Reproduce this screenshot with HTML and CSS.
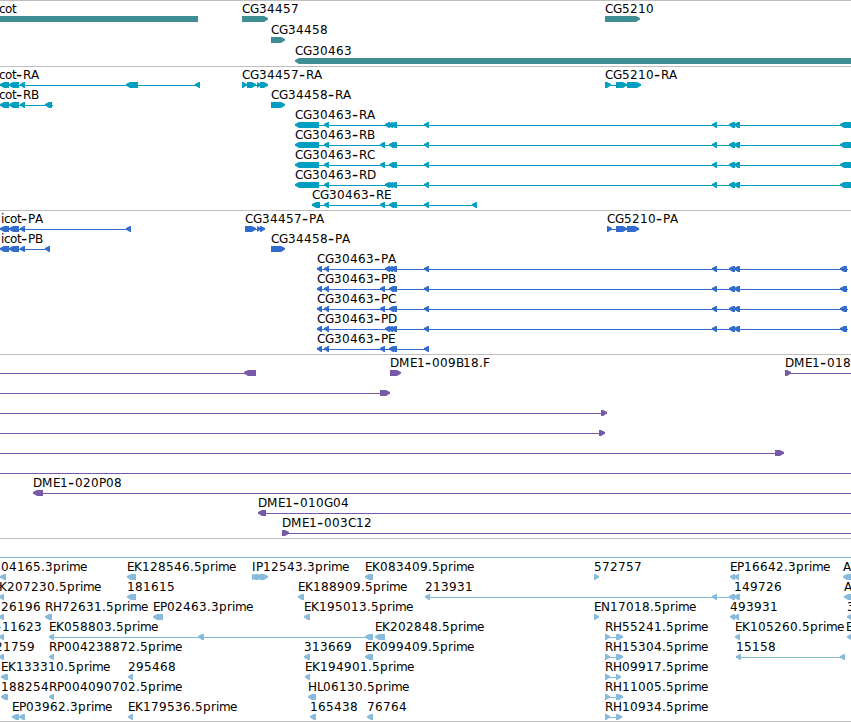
FILE: index.html
```html
<!DOCTYPE html>
<html lang="en">
<head>
    <meta charset="UTF-8">
    <meta name="viewport" content="width=device-width, initial-scale=1.0">
    <title>Genome Browser</title>
    <link rel="stylesheet" href="styles.css">
</head>
<body>
    <main class="browser">
        <section class="track genes" id="genes"></section>
        <section class="track transcripts" id="transcripts"></section>
        <section class="track proteins" id="proteins"></section>
        <section class="track clones" id="clones"></section>
        <section class="track insertions" id="insertions"></section>
    </main>
    <script src="script.js"></script>
</body>
</html>
```

FILE: styles.css
```css
body {
    margin: 0;
    background-color: #fff;
    overflow: hidden;
}
.browser {
    display: flex;
    flex-direction: column;
    width: 851px;
}
.track {
    border-top: 1px solid #bebebe;
    padding: 1px 0 2px;
}
.genes {
    color: #3e8e94;
    padding-bottom: 1px;
}
.transcripts {
    color: #009ec1;
}
.proteins {
    color: #326ccd;
}
.clones {
    color: #7859a8;
}
.insertions {
    color: #87bbdd;
    border-bottom: 1px solid #bebebe;
    padding-bottom: 1px;
}
.row {
    display: block;
    width: 851px;
    height: 20px;
    overflow: visible;
}
.genes .row {
    height: 21px;
}
.shape {
    fill: currentColor;
}
.label {
    fill: #000;
    font-family: "DejaVu Sans", Verdana, sans-serif;
    font-size: 12px;
}
.dash {
    font-size: 17px;
}
```

FILE: script.js
```javascript
const SVG = 'http://www.w3.org/2000/svg';

// glyph advances, digits are 8px
const advance = {
    C: 8, G: 9, R: 8, A: 8, B: 7, D: 9, E: 7, P: 7, M: 11, K: 8, H: 9, L: 6, N: 9, I: 4, F: 7,
    '-': 7, '.': 4, c: 6, o: 7, t: 4, p: 8, r: 5, i: 3, m: 11, e: 7
};

// feature: [label, label x, direction, exons, line]
const right = [[712, 717], [729, 735], [734, 740]];
const cot = [[0, 9], [9, 19], [20, 25]];
const introns1 = [[324, 329], [385, 390], [388, 393], [391, 397], [424, 429]];
const introns2 = [[324, 329], [380, 385], [389, 394], [391, 397], [424, 429]];
const rna = first => [[295, 319], ...first, ...right, [840, 860]];
const pep = first => [[317, 322], ...first, ...right, [840, 847]];
const rh = end => [[605, 610], [616, end]];

const tracks = {
    genes: [
        [['cot', -1, '', [[-10, 198]]], ['CG34457', 242, '>', [[242, 268]]], ['CG5210', 605, '>', [[605, 640]]]],
        [['CG34458', 271, '>', [[271, 285]]]],
        [['CG30463', 295, '<', [[295, 860]]]]
    ],
    transcripts: [
        [['cot-RA', -1, '<', [...cot, [126, 138], [195, 200]], [0, 200]],
            ['CG34457-RA', 242, '>', [[242, 247], [247, 256], [257, 261], [260, 268]], [242, 268]],
            ['CG5210-RA', 605, '>', [[605, 611], [616, 627], [627, 641]], [605, 641]]],
        [['cot-RB', -1, '<', [...cot, [45, 52]], [0, 53]], ['CG34458-RA', 271, '>', [[271, 285]]]],
        [['CG30463-RA', 295, '<', rna(introns1), [295, 851]]],
        [['CG30463-RB', 295, '<', rna(introns2), [295, 851]]],
        [['CG30463-RC', 295, '<', rna(introns2), [295, 851]]],
        [['CG30463-RD', 295, '<', rna(introns1), [295, 851]]],
        [['CG30463-RE', 312, '<', [[312, 320], ...introns2, [472, 477]], [312, 477]]]
    ],
    proteins: [
        [['icot-PA', 1, '<', [...cot, [126, 131]], [0, 131]],
            ['CG34457-PA', 245, '>', [[245, 256], [257, 261], [260, 265]], [245, 265]],
            ['CG5210-PA', 607, '>', [[607, 612], [616, 627], [627, 639]], [607, 639]]],
        [['icot-PB', 1, '<', [...cot, [45, 50]], [0, 50]], ['CG34458-PA', 271, '>', [[271, 285]]]],
        [['CG30463-PA', 317, '<', pep(introns1), [317, 848]]],
        [['CG30463-PB', 317, '<', pep(introns2), [317, 848]]],
        [['CG30463-PC', 317, '<', pep(introns2), [317, 848]]],
        [['CG30463-PD', 317, '<', pep(introns1), [317, 848]]],
        [['CG30463-PE', 317, '<', [[317, 322], ...introns2], [317, 429]]]
    ],
    clones: [
        [['', 0, '<', [[244, 256]], [0, 256]], ['DME1-009B18.F', 390, '>', [[390, 401]]],
            ['DME1-018', 785, '>', [[785, 791]], [785, 851]]],
        [['', 0, '>', [[380, 390]], [0, 390]]],
        [['', 0, '>', [[601, 607]], [0, 607]]],
        [['', 0, '>', [[599, 605]], [0, 605]]],
        [['', 0, '>', [[775, 784]], [0, 784]]],
        [['', 0, '>', [], [0, 851]]],
        [['DME1-020P08', 33, '<', [[33, 43]], [33, 851]]],
        [['DME1-010G04', 258, '<', [[258, 266]], [258, 851]]],
        [['DME1-003C12', 282, '>', [[282, 289]], [282, 851]]]
    ],
    insertions: [
        [['', 0, '<', [], [0, 851]]],
        [['04165.3prime', 1, '<', [[0, 6]]], ['EK128546.5prime', 127, '<', [[127, 136]]],
            ['IP12543.3prime', 252, '>', [[252, 257], [255, 262], [260, 268]], [252, 268]],
            ['EK083409.5prime', 365, '<', [[365, 373]]], ['572757', 594, '>', [[594, 599]]],
            ['EP16642.3prime', 730, '<', [[730, 735], [734, 739]]], ['A', 843, '<', [[843, 860]]]],
        [['K207230.5prime', -1, '<', [[-1, 4]]], ['181615', 127, '<', [[127, 136]]],
            ['EK188909.5prime', 298, '<', [[298, 304]]],
            ['213931', 425, '<', [[425, 430], ...right], [425, 740]],
            ['149726', 734, '', []], ['A', 844, '<', [[844, 860]]]],
        [['26196', 1, '<', [[-1, 4]]], ['RH72631.5prime', 45, '<', [[45, 52]]],
            ['EP02463.3prime', 153, '<', [[153, 163]]], ['EK195013.5prime', 304, '<', [[304, 310]]],
            ['EN17018.5prime', 594, '>', [[594, 599]]], ['493931', 730, '<', [[730, 735], [734, 739]]],
            ['3', 847, '<', [[847, 860]]]],
        [['-11623', -5, '<', [[-1, 4]]],
            ['EK058803.5prime', 49, '<', [[49, 54], [198, 204], [365, 373]], [49, 373]],
            ['EK202848.5prime', 375, '<', [[375, 385]]], ['RH55241.5prime', 605, '>', rh(623), [605, 623]],
            ['EK105260.5prime', 735, '<', [[735, 740]]], ['E', 846, '<', [[847, 860]]]],
        [['21759', -5, '<', [[-1, 4]]], ['RP004238872.5prime', 49, '<', [[49, 54]]],
            ['313669', 304, '<', [[304, 310]]], ['EK099409.5prime', 365, '<', [[365, 373]]],
            ['RH15304.5prime', 605, '>', rh(623), [605, 623]],
            ['15158', 736, '<', [[736, 741], [840, 845]], [736, 845]]],
        [['EK133310.5prime', 1, '<', [[1, 8]]], ['295468', 128, '<', [[128, 133]]],
            ['EK194901.5prime', 305, '<', [[305, 310]]], ['RH09917.5prime', 605, '>', rh(621), [605, 621]]],
        [['188254', 1, '<', [[1, 8]]], ['RP004090702.5prime', 49, '<', [[49, 54]]],
            ['HL06130.5prime', 308, '<', [[308, 316]]], ['RH11005.5prime', 605, '>', rh(623), [605, 623]]],
        [['EP03962.3prime', 12, '<', [[12, 19], [19, 25]]], ['EK179536.5prime', 128, '<', [[128, 133]]],
            ['165438', 310, '<', [[310, 316]]], ['76764', 367, '<', [[367, 373]]],
            ['RH10934.5prime', 605, '>', rh(622), [605, 622]]]
    ]
};

function add(parent, name, attrs) {
    const el = document.createElementNS(SVG, name);
    for (const key in attrs) {
        el.setAttribute(key, attrs[key]);
    }
    parent.appendChild(el);
    return el;
}

function exonPoints(a, b, direction) {
    if (direction === '<') {
        return `${a},16 ${a + 4},14 ${b},14 ${b},20 ${a + 4},20 ${a},17.5`;
    }
    if (direction === '>') {
        return `${a},14 ${b - 4},14 ${b},16 ${b},17.5 ${b - 4},20 ${a},20`;
    }
    return `${a},14 ${b},14 ${b},20 ${a},20`;
}

function drawLabel(svg, label, x) {
    const xs = [];
    const ys = [];
    let pos = x;
    for (const ch of label) {
        xs.push(pos);
        ys.push(ch === '-' ? 12 : 11);
        pos += advance[ch] || 8;
    }
    const text = add(svg, 'text', { class: 'label', x: xs.join(' '), y: ys.join(' ') });
    label.split(/(-)/).forEach(part => {
        if (part === '-') {
            add(text, 'tspan', { class: 'dash' }).textContent = part;
        } else {
            text.append(part);
        }
    });
}

function drawFeature(svg, [label, x, direction, exons, line]) {
    if (line) {
        add(svg, 'rect', { class: 'shape', x: line[0], y: 17, width: line[1] - line[0], height: 1 });
    }
    exons.forEach(([a, b]) => {
        add(svg, 'polygon', { class: 'shape', points: exonPoints(a, b, direction) });
    });
    if (label) {
        drawLabel(svg, label, x);
    }
}

for (const id in tracks) {
    const track = document.getElementById(id);
    tracks[id].forEach(features => {
        const svg = add(track, 'svg', { class: 'row' });
        features.forEach(feature => drawFeature(svg, feature));
    });
}
```
